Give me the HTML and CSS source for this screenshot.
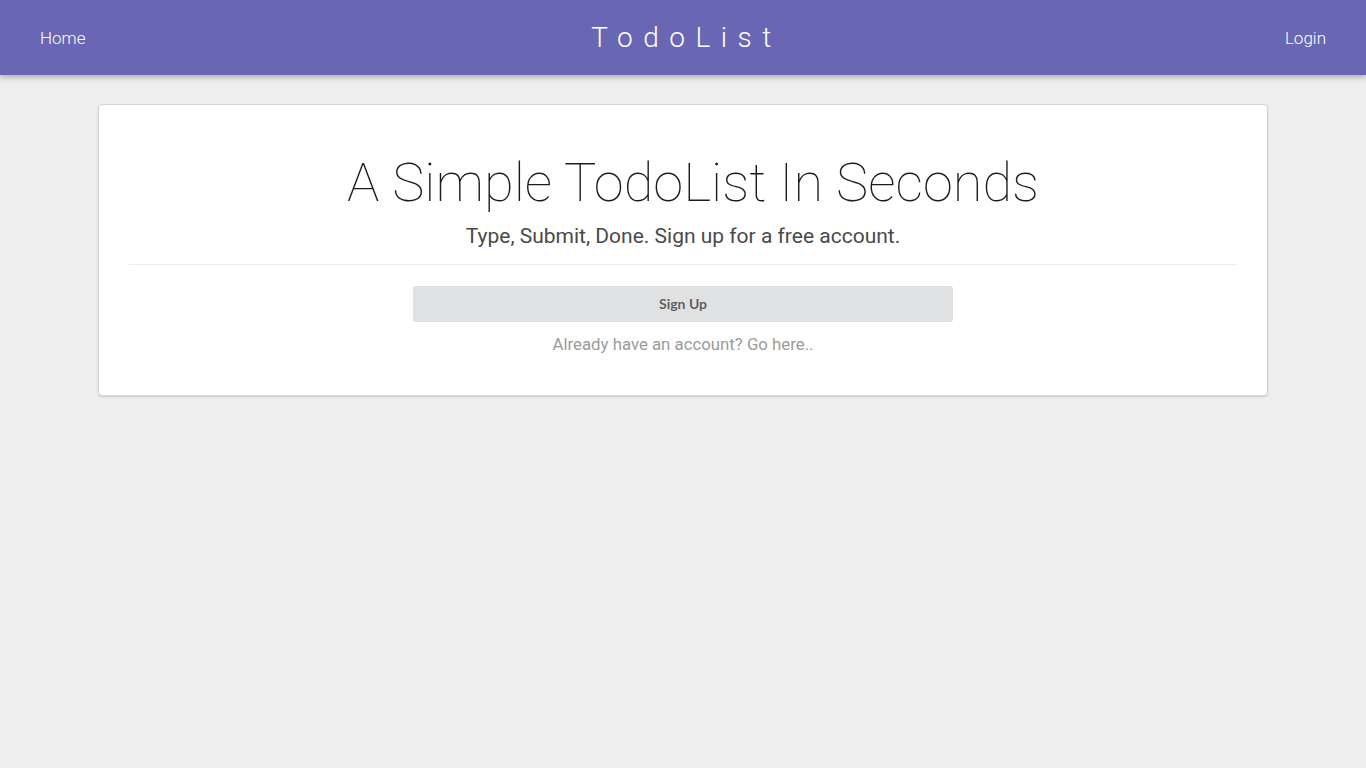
FILE: index.html
```html
<!DOCTYPE html>
<html>
<head>
<meta charset="utf-8">
<link rel="stylesheet" href="styles.css">
</head>
<body>
<header class="nav">
  <a class="nav-link" href="#">Home</a>
  <div class="brand">TodoList</div>
  <a class="nav-link" href="#">Login</a>
</header>
<main class="main">
  <section class="card">
    <h1 class="title">A Simple TodoList In Seconds</h1>
    <p class="subtitle">Type, Submit, Done. Sign up for a free account.</p>
    <hr class="divider">
    <div class="actions">
      <button class="btn">Sign Up</button>
      <a class="login-link" href="#">Already have an account? Go here..</a>
    </div>
  </section>
</main>
</body>
</html>
```
FILE: styles.css
```css
html, body {
  margin: 0;
  padding: 0;
}
body {
  background: #eeeeee;
  font-family: Roboto, "Liberation Sans", sans-serif;
  min-height: 768px;
}
.nav {
  height: 75px;
  background: #6967b3;
  display: flex;
  align-items: center;
  justify-content: space-between;
  padding: 0 40px;
  box-shadow: 0 2px 6px rgba(0,0,0,0.3);
  position: relative;
}
.nav-link {
  color: #fff;
  text-decoration: none;
  font-size: 17px;
  font-weight: 300;
}
.brand {
  color: #fff;
  font-size: 28px;
  font-weight: 300;
  letter-spacing: 10.5px;
  margin-right: -2.5px;
}
.main {
  padding: 29px 98px;
}
.card {
  background: #fff;
  border: 1px solid #d4d4d5;
  border-radius: 4px;
  box-shadow: 0 1px 2px rgba(34,36,38,0.15);
  padding: 0 30px 40px;
  text-align: center;
}
.title {
  margin: 48px 0 0;
  padding-left: 20px;
  font-size: 54.2px;
  font-weight: 100;
  line-height: 60px;
  color: #1b1c1d;
}
.subtitle {
  margin: 9px 0 0;
  font-size: 21px;
  line-height: 28px;
  color: #4a4a4a;
}
.divider {
  border: 0;
  border-top: 1px solid #ececec;
  margin: 14px 0 21px;
}
.actions {
  display: flex;
  flex-direction: column;
  align-items: center;
  gap: 11px;
}
.btn {
  width: 540px;
  height: 36px;
  border: 0;
  border-radius: 3px;
  background: #e0e1e2;
  color: rgba(0,0,0,0.6);
  font-family: Lato, "Liberation Sans", sans-serif;
  font-weight: 700;
  font-size: 14px;
  padding: 0 0 2px;
}
.login-link {
  font-size: 16.8px;
  line-height: 22px;
  color: #9b9b9b;
  text-decoration: none;
}
```
